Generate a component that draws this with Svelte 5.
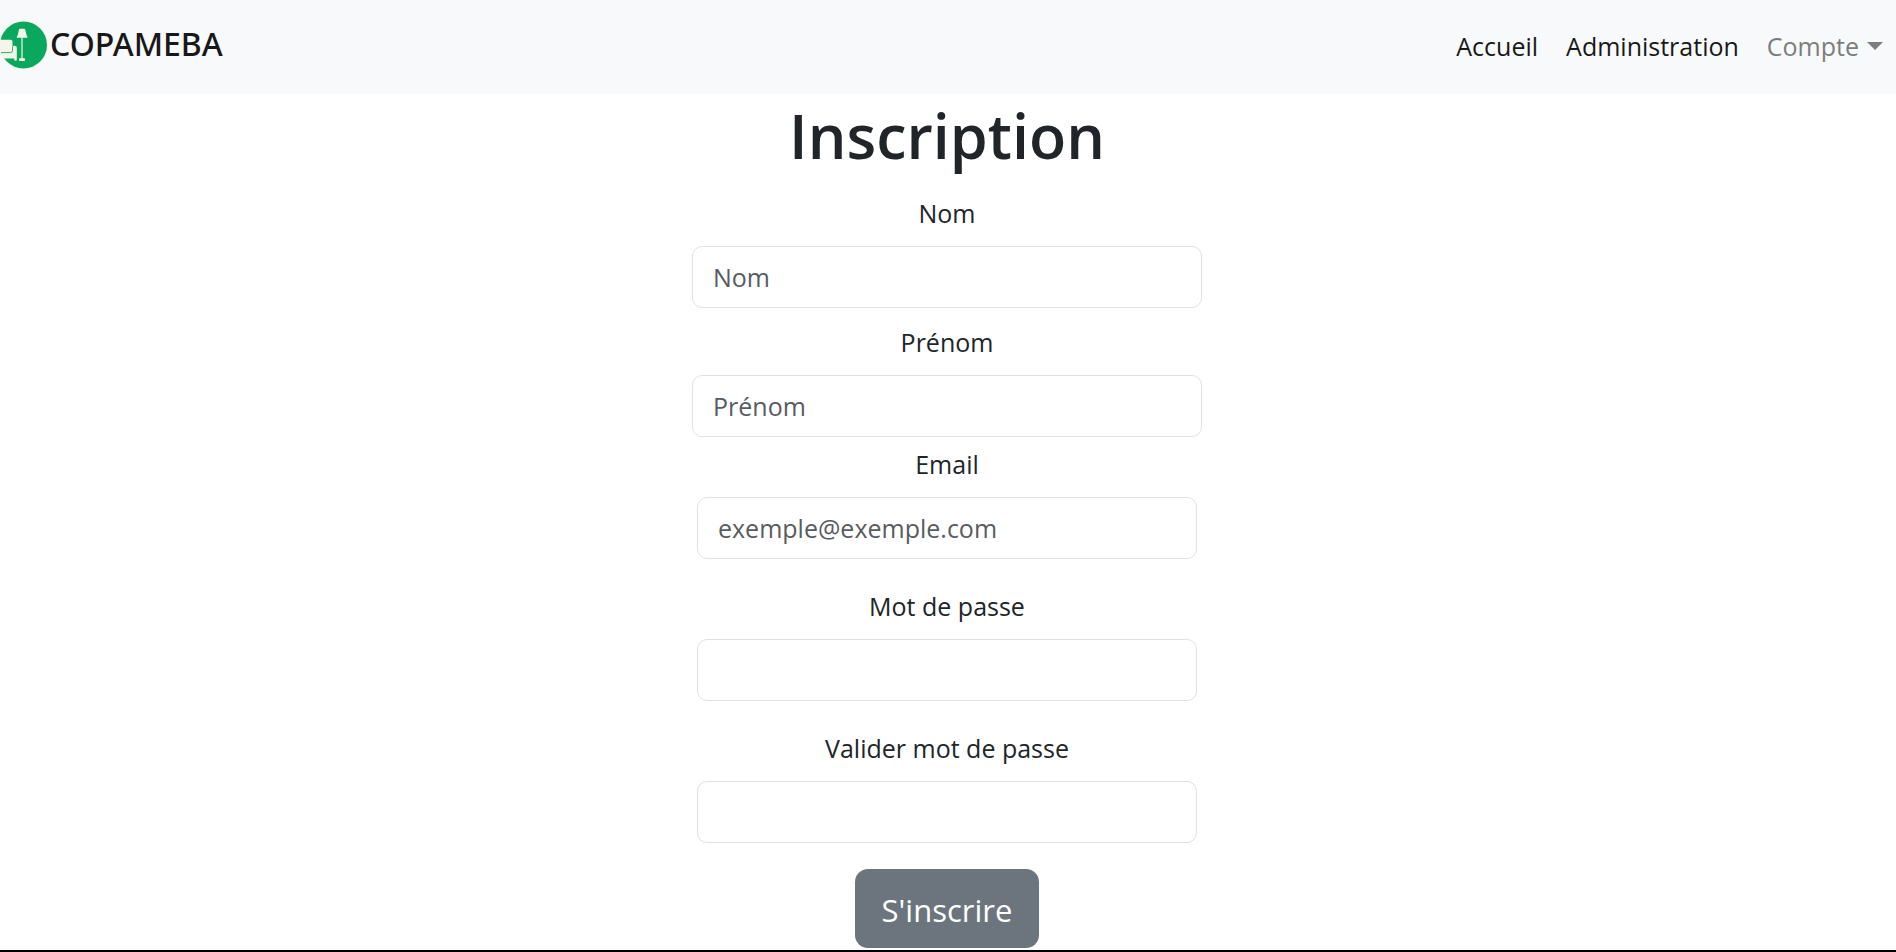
<script>
  const fields = [
    { id: 'nom', label: 'Nom', type: 'text', placeholder: 'Nom', group: 'name' },
    { id: 'prenom', label: 'Prénom', type: 'text', placeholder: 'Prénom', group: 'name' },
    { id: 'email', label: 'Email', type: 'email', placeholder: 'exemple@exemple.com', group: 'email' },
    { id: 'password', label: 'Mot de passe', type: 'password', placeholder: '', group: 'secret' },
    { id: 'confirm', label: 'Valider mot de passe', type: 'password', placeholder: '', group: 'secret' }
  ];
</script>

<header class="navbar">
  <a class="brand" href="#accueil">
    <svg class="logo" viewBox="0 0 48 50" aria-hidden="true">
      <circle cx="23.5" cy="25" r="24.5" fill="#f5f6ea" />
      <circle cx="23.5" cy="25" r="23.500" fill="#0aa85e" />
      <path d="M19 9.500q0-.8 1-.8h4q1 0 1.200.8 1 5.500 2.500 8.200h-11.200q1.800-3 2.500-8.200z" fill="#f5f6ea" />
      <path d="M21.400 17.500h1.200v21.500h-1.200z" fill="#f5f6ea" />
      <rect x="19" y="38.200" width="6" height="2.700" rx=".8" fill="#f5f6ea" />
      <path d="M0 19.700h10.500q2 0 2 2v5.300q.8-1.200 2.300-1.200 2 0 2 2v12q0 1-1.300 1t-1.300-1.200v-1.200H3.500L0 33z" fill="#f5f6ea" />
      <path d="M1 32.600h9.500q2 0 2-2v-4" fill="none" stroke="#0aa85e" stroke-width=".9" />
    </svg>
    <span>COPAMEBA</span>
  </a>
  <nav class="links" aria-label="Navigation principale">
    <a href="#accueil">Accueil</a>
    <a href="#administration">Administration</a>
    <button class="account" type="button" aria-haspopup="true">Compte<span class="caret"></span></button>
  </nav>
</header>

<main>
  <h1>Inscription</h1>
  <form>
    {#each fields as field (field.id)}
      <div class="field {field.group}">
        <label for={field.id}>{field.label}</label>
        <input id={field.id} type={field.type} placeholder={field.placeholder} />
      </div>
    {/each}
    <button class="submit" type="button">S'inscrire</button>
  </form>
</main>
<footer></footer>

<style>
  :global(body) {
    background: #fff;
    color: #212529;
    font-family: 'Segoe UI', 'Open Sans', 'Noto Sans', sans-serif;
    font-size: 25px;
    line-height: 40px;
  }
  .navbar {
    display: flex;
    align-items: center;
    justify-content: space-between;
    height: 94px;
    padding-right: 13px;
    box-sizing: border-box;
    background: #f8f9fa;
  }
  .brand {
    display: flex;
    align-items: center;
    gap: 2px;
    padding-bottom: 4px;
    color: #181818;
    font-family: 'Segoe UI', 'Noto Sans', sans-serif;
    font-size: 32px;
    font-weight: 500;
    text-decoration: none;
  }
  .logo {
    width: 48px;
    height: 50px;
  }
  .brand span {
    padding-bottom: 2px;
  }
  .links {
    display: flex;
    align-items: center;
    gap: 28px;
    padding-bottom: 2px;
  }
  .links a {
    color: #181818;
    text-decoration: none;
  }
  .account {
    display: flex;
    align-items: center;
    gap: 8px;
    padding: 0;
    border: 0;
    background: none;
    color: #7c7d7d;
    font: inherit;
  }
  .caret {
    border-top: 8px solid;
    border-right: 8px solid transparent;
    border-left: 8px solid transparent;
  }
  main {
    padding-right: 2px;
  }
  h1 {
    margin: 0;
    padding-bottom: 16px;
    font-size: 61px;
    font-weight: 600;
    line-height: 83px;
    text-align: center;
  }
  form {
    display: flex;
    flex-direction: column;
    align-items: center;
    padding: 0 16px;
  }
  .field {
    display: flex;
    flex-direction: column;
    gap: 13px;
    width: 100%;
    max-width: 500px;
    text-align: center;
  }
  .name {
    max-width: 510px;
  }
  .name + .name {
    margin-top: 14px;
  }
  .email {
    margin-top: 7px;
  }
  .secret {
    margin-top: 27px;
  }
  input {
    width: 100%;
    height: 62px;
    padding: 0 20px;
    box-sizing: border-box;
    border: 1px solid #dee2e6;
    border-radius: 10px;
    background: #fff;
    color: #212529;
    font: inherit;
  }
  input::placeholder {
    color: #595c5f;
    opacity: 1;
  }
  .submit {
    height: 79px;
    margin: 26px 0 2px;
    padding: 2px 27px 0;
    border: 0;
    border-radius: 13px;
    background: #6c757d;
    color: #fff;
    font: inherit;
    font-size: 31px;
  }
  footer {
    height: 2px;
    background: #000;
  }
</style>
